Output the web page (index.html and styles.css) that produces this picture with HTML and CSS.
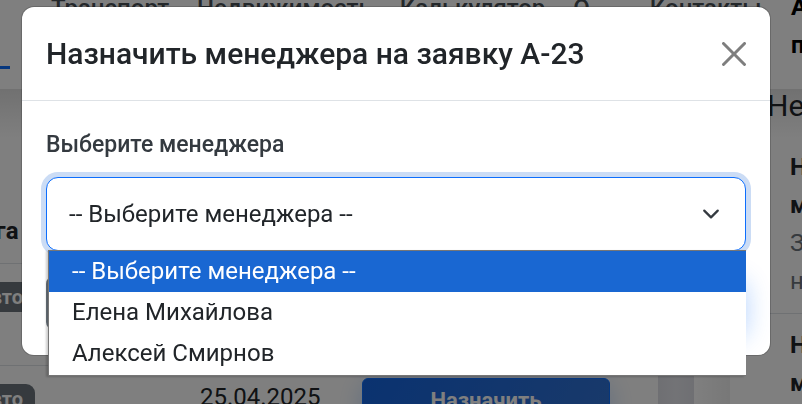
FILE: index.html
```html
<!DOCTYPE html>
<html lang="ru">
<head>
<meta charset="utf-8">
<meta name="viewport" content="width=device-width, initial-scale=1">
<title>Назначить менеджера</title>
<link rel="stylesheet" href="styles.css">
</head>
<body>
<div class="page">
  <header class="topbar">
    <span class="brand-line"></span>
    <nav class="nav">
      <a href="#">Транспорт</a>
      <a href="#">Недвижимость</a>
      <a href="#">Калькулятор</a>
      <a href="#" class="nav-about">О</a>
      <a href="#">Контакты</a>
    </nav>
    <div class="account">А<br>п</div>
  </header>
  <main class="content">
    <section class="requests">
      <table class="table">
        <thead>
          <tr><th class="col-type">Услуга</th><th class="col-date"></th><th></th></tr>
        </thead>
        <tbody>
          <tr>
            <td><span class="badge">Авто</span></td>
            <td></td>
            <td><button class="btn-row" type="button">Назначить</button></td>
          </tr>
          <tr>
            <td><span class="badge">Авто</span></td>
            <td class="date">25.04.2025</td>
            <td><button class="btn-row" type="button">Назначить</button></td>
          </tr>
        </tbody>
      </table>
    </section>
    <div class="gutter"></div>
    <aside class="side">
      <h2>Не</h2>
      <ul>
        <li><b>Н<br>м</b><p>З<br>н</p></li>
        <li><b>Н<br>м</b></li>
      </ul>
    </aside>
  </main>
</div>

<div class="backdrop"></div>

<div class="modal-wrap">
  <div class="modal" role="dialog" aria-labelledby="modal-title">
    <div class="modal-header">
      <h1 id="modal-title">Назначить менеджера на заявку A-23</h1>
      <button class="close" type="button" aria-label="Закрыть">
        <svg viewBox="0 0 16 16" width="24" height="24"><path d="M.293.293a1 1 0 0 1 1.414 0L8 6.586 14.293.293a1 1 0 1 1 1.414 1.414L9.414 8l6.293 6.293a1 1 0 0 1-1.414 1.414L8 9.414l-6.293 6.293a1 1 0 0 1-1.414-1.414L6.586 8 .293 1.707a1 1 0 0 1 0-1.414z"/></svg>
      </button>
    </div>
    <div class="modal-body">
      <label for="manager">Выберите менеджера</label>
      <div class="select-box">
        <select id="manager">
          <option>-- Выберите менеджера --</option>
          <option>Елена Михайлова</option>
          <option>Алексей Смирнов</option>
        </select>
        <svg class="chevron" viewBox="0 0 16 16" width="18" height="18"><path d="m2 5 6 6 6-6"/></svg>
        <ul class="options">
          <li class="active">-- Выберите менеджера --</li>
          <li>Елена Михайлова</li>
          <li>Алексей Смирнов</li>
        </ul>
      </div>
      <div class="actions">
        <button class="btn-cancel" type="button" aria-label="Отмена"></button>
        <button class="btn-submit" type="button" aria-label="Назначить"></button>
      </div>
    </div>
  </div>
</div>
</body>
</html>
```
FILE: styles.css
```css
* { box-sizing: border-box; }

body {
  margin: 0;
  height: 100vh;
  overflow: hidden;
  background: #fff;
  color: #212529;
  font-family: Roboto, "Noto Sans", sans-serif;
  font-size: 24px;
  line-height: 38px;
}

h1, h2, p, ul { margin: 0; padding: 0; }
ul { list-style: none; }
button { font: inherit; border: 0; padding: 0; }

/* Page under the dialog */
.page { height: 100vh; overflow: hidden; }

.topbar {
  display: flex;
  height: 89px;
  background: #fff;
}
.brand-line {
  flex: none;
  width: 10px;
  height: 3px;
  margin-top: 66px;
  background: #0d6efd;
}
.nav {
  display: flex;
  flex: 1;
  gap: 28px;
  margin: -11px 0 0 41px;
}
.nav a { color: #495057; font-weight: 500; text-decoration: none; }
.nav-about { margin-right: 32px; }
.account {
  width: 11px;
  margin-top: -12px;
  color: #000;
  font-weight: 700;
}

.content {
  display: grid;
  grid-template-columns: 1fr 36px 108px;
  background: linear-gradient(#e2e2e2, #fff 50px);
}
.requests { padding-top: 122px; overflow: hidden; }
.gutter { background: linear-gradient(90deg, #dedfe6, #e6e7ed 50%, #dedfe6); }

.table {
  width: calc(100% + 72px);
  margin-left: -72px;
  border-collapse: collapse;
  table-layout: fixed;
}
th {
  height: 52px;
  padding: 0 0 12px;
  text-align: left;
  font-weight: 700;
  border-bottom: 1px solid #dee2e6;
}
td {
  height: 102px;
  padding: 12px 0 0;
  vertical-align: top;
  border-bottom: 1px solid #dee2e6;
}
.col-type { width: 272px; padding-left: 15px; }
.col-date { width: 162px; }
.badge {
  display: block;
  width: 100px;
  height: 30px;
  margin: 6px 0 0 7px;
  padding-right: 12px;
  border-radius: 9px;
  background: #6c757d;
  color: #fff;
  font-size: 20px;
  font-weight: 700;
  line-height: 30px;
  text-align: right;
}
.btn-row {
  display: block;
  width: 248px;
  height: 78px;
  padding-bottom: 32px;
  border: 1px solid #0d6efd;
  border-radius: 6px;
  background: linear-gradient(120deg, #1565e0, #3474d4);
  box-shadow: 0 6px 24px rgba(13, 110, 253, .25);
  color: #fff;
  font-size: 22px;
  font-weight: 700;
}

.side {
  overflow: hidden;
  background: linear-gradient(90deg, #fff, #f0f0f0 36px, transparent 36px);
}
.side h2 { margin: -3px 0 10px 73px; font-size: 30px; font-weight: 400; line-height: 40px; }
.side li { padding: 12px 0 13px 96px; border-bottom: 1px solid #dee2e6; }
.side b { font-weight: 700; }
.side p { color: #6c757d; }

.backdrop { position: fixed; inset: 0; background: rgba(0, 0, 0, .5); }

/* Dialog */
.modal-wrap { position: fixed; inset: 0; padding: 7px 32px 0 22px; }
.modal {
  border-radius: 12px;
  background: #fff;
  box-shadow: 0 0 0 1px rgba(0, 0, 0, .175);
}
.modal-header {
  display: flex;
  align-items: center;
  justify-content: space-between;
  height: 94px;
  padding: 0 24px;
  border-bottom: 1px solid #dee2e6;
}
.modal-header h1 { font-size: 30px; font-weight: 500; line-height: 40px; }
.close { width: 24px; height: 24px; background: none; opacity: .5; }
.close svg { display: block; }

.modal-body { padding: 24px; }
.modal-body label {
  display: block;
  margin-bottom: 12px;
  color: #343a40;
  font-size: 23px;
  font-weight: 500;
  line-height: 40px;
}
.select-box { position: relative; }
select {
  display: block;
  width: 100%;
  height: 74px;
  padding: 0 22px;
  appearance: none;
  border: 1px solid #0d6efd;
  border-radius: 12px;
  outline: 0;
  background: #fff;
  box-shadow: 0 0 0 5px #cbdcf5;
  color: #212529;
  font: inherit;
}
.chevron {
  position: absolute;
  top: 28px;
  right: 26px;
  fill: none;
  stroke: #343a40;
  stroke-width: 2;
  stroke-linecap: round;
  stroke-linejoin: round;
}
.options {
  position: absolute;
  top: 73px;
  left: 2px;
  right: 0;
  padding-bottom: 1px;
  border: 1px solid #767676;
  border-right: 0;
  background: #fff;
  box-shadow: -2px 1px 2px rgba(0, 0, 0, .2);
  color: #212529;
}
.options li { padding: 0 23px; line-height: 41px; }
.options .active { background: #1967d2; color: #fff; }

.actions { display: flex; justify-content: space-between; margin-top: 24px; }
.actions button { width: 160px; height: 56px; border-radius: 9px; }
.btn-cancel { background: #6c757d; }
.actions .btn-submit { background: #0d6efd; box-shadow: 0 6px 24px rgba(13, 110, 253, .3); }
```
